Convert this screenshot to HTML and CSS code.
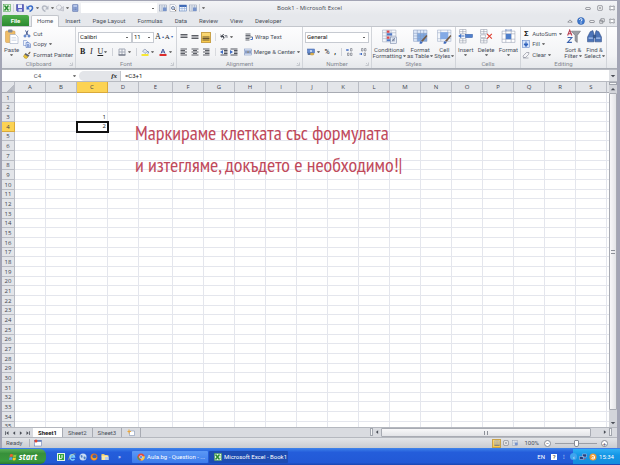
FILE: index.html
```html
<!DOCTYPE html>
<html lang="bg">
<head>
    <meta charset="UTF-8">
    <meta name="viewport" content="width=device-width, initial-scale=1.0">
    <title>Book1 - Microsoft Excel</title>
    <link rel="stylesheet" href="styles.css">
</head>
<body>

    <!-- icons -->
    <svg class="sprite" aria-hidden="true">
        <symbol id="excel" viewBox="0 0 16 16"><rect x="1" y="1" width="14" height="14" fill="#e8f5e4" stroke="#3a9a3c"/><path d="M3 3l8 10M11 3L3 13" stroke="#2a8c30" stroke-width="3"/><path d="M11 5h4M11 8h4M11 11h4" stroke="#6fb96a"/></symbol>
        <symbol id="save" viewBox="0 0 16 16"><path d="M1 1h14v14H3l-2-2z" fill="#5a5fc0" stroke="#3d4299"/><rect x="4" y="1" width="8" height="7" fill="#eef1fb"/><rect x="5" y="10" width="7" height="5" fill="#c9cdea"/></symbol>
        <symbol id="undo" viewBox="0 0 16 16"><path d="M4 7c3-5 10-4 9 2-1 3-3 5-6 6" fill="none" stroke="#3a6cc8" stroke-width="3"/><path d="M1 3v8h7z" fill="#3a6cc8"/></symbol>
        <symbol id="redo" viewBox="0 0 16 16"><path d="M12 7c-3-5-10-4-9 2 1 3 3 5 6 6" fill="none" stroke="#b4b9c4" stroke-width="3"/><path d="M15 3v8H8z" fill="#b4b9c4"/></symbol>
        <symbol id="shape" viewBox="0 0 16 16"><circle cx="6" cy="7" r="5" fill="none" stroke="#b9bcc6" stroke-width="2" stroke-dasharray="3 1"/><path d="M7 12l8-7v9z" fill="#d4d6dc" stroke="#a9adb8"/></symbol>
        <symbol id="calc" viewBox="0 0 16 16"><rect x="3" y="1" width="11" height="14" rx="1" fill="#8fa5d6" stroke="#5a6ea6"/><path d="M5 4h7" stroke="#dde6fa" stroke-width="2"/><path d="M5 8h7M5 11h7" stroke="#56699f" stroke-dasharray="2 1"/></symbol>
        <symbol id="sheeticon" viewBox="0 0 16 16"><rect x="1" y="2" width="14" height="12" fill="#f1f4f8" stroke="#7c8ba6"/><path d="M1 6h14M1 10h14M6 2v12M11 2v12" stroke="#93a3bd"/><rect x="8" y="7" width="7" height="7" fill="#7693cc"/></symbol>
        <symbol id="magnify" viewBox="0 0 16 16"><path d="M2 1h9l3 3v11H2z" fill="#fafbfd" stroke="#a0a6b4"/><circle cx="8" cy="8" r="3" fill="#d9e5f5" stroke="#7686a6" stroke-width="2"/><path d="M10 10l4 4" stroke="#8c7258" stroke-width="2"/></symbol>
        <symbol id="table" viewBox="0 0 16 16"><rect x="1" y="2" width="14" height="12" fill="#eef3fb" stroke="#4770b5"/><path d="M1 4h14" stroke="#3e69b6" stroke-width="4"/><path d="M1 9h14M6 5v9M11 5v9" stroke="#87a3d2"/></symbol>
        <symbol id="paste" viewBox="0 0 28 30"><rect x="2" y="4" width="19" height="23" rx="2" fill="#efbd68" stroke="#c99242"/><rect x="7" y="1" width="9" height="6" rx="2" fill="#7f8798"/><path d="M11 11h11l5 5v13H11z" fill="#fff" stroke="#8d9cba"/><path d="M14 17h9M14 20h10M14 23h10" stroke="#b8c4da"/></symbol>
        <symbol id="cut" viewBox="0 0 16 16"><path d="M5 1l5 9M10 1L6 10" stroke="#45598f" stroke-width="2"/><circle cx="4" cy="12" r="2" fill="none" stroke="#3865bd" stroke-width="2"/><circle cx="12" cy="12" r="2" fill="none" stroke="#3865bd" stroke-width="2"/></symbol>
        <symbol id="copy" viewBox="0 0 16 16"><path d="M1 1h6l2 2v8H1z" fill="#eef3fd" stroke="#5c7ac0"/><path d="M6 5h6l3 3v7H6z" fill="#cfdcf6" stroke="#4466b4"/><path d="M8 9h4M8 11h5M8 13h5" stroke="#4466b4"/></symbol>
        <symbol id="painter" viewBox="0 0 16 16"><path d="M10 5l4-4 1 2-3 4z" fill="#71593c"/><path d="M5 4l8 5-3 3-7-5z" fill="#5b6070"/><path d="M3 7l7 5-3 3c-3 0-5-2-6-4z" fill="#e8c33c" stroke="#a8871f"/></symbol>
        <symbol id="borders" viewBox="0 0 16 16"><path d="M2 2h12v12H2zM8 2v12M2 8h12" fill="none" stroke="#a3a9b6" stroke-width="2"/><path d="M1 14h14" stroke="#5b6170" stroke-width="2"/></symbol>
        <symbol id="bucket" viewBox="0 0 16 16"><path d="M3 6l5-4 5 5-5 4z" fill="#dfe6f2" stroke="#62708e"/><path d="M13 6c2 2 2 4 1 5" stroke="#3c65b0" stroke-width="2" fill="none"/><rect x="1" y="12" width="14" height="4" fill="#f6e736"/></symbol>
        <symbol id="fontcolor" viewBox="0 0 16 16"><path d="M4 11l4-9 4 9M5 8h6" fill="none" stroke="#44599a" stroke-width="2"/><rect x="1" y="12" width="14" height="4" fill="#dc2c2c"/></symbol>
        <symbol id="lines" viewBox="0 0 16 16"><path d="M1 3h14M1 6h14M1 9h14" stroke="#5c5f66" stroke-width="2"/></symbol>
        <symbol id="lines-mid" viewBox="0 0 16 16"><path d="M1 5h14M1 8h14M1 11h14" stroke="#5c5f66" stroke-width="2"/></symbol>
        <symbol id="lines-low" viewBox="0 0 16 16"><path d="M1 8h14M1 11h14M1 14h14" stroke="#6a5630" stroke-width="2"/></symbol>
        <symbol id="left" viewBox="0 0 16 16"><path d="M1 2h13M1 5h9M1 8h13M1 11h9M1 14h13" stroke="#5c5f66" stroke-width="2"/></symbol>
        <symbol id="center" viewBox="0 0 16 16"><path d="M1 2h14M4 5h8M1 8h14M4 11h8M1 14h14" stroke="#5c5f66" stroke-width="2"/></symbol>
        <symbol id="right" viewBox="0 0 16 16"><path d="M2 2h13M6 5h9M2 8h13M6 11h9M2 14h13" stroke="#5c5f66" stroke-width="2"/></symbol>
        <symbol id="orient" viewBox="0 0 16 16"><path d="M4 14L14 5M14 5v5M14 5H9" stroke="#8b8f98" stroke-width="2" fill="none"/><path d="M1 4l7 6M3 9l4-7M1 7h7" stroke="#40444e" stroke-width="2"/></symbol>
        <symbol id="outdent" viewBox="0 0 16 16"><path d="M1 2h14M8 5h7M8 8h7M8 11h7M1 14h14" stroke="#50545e" stroke-width="2"/><path d="M6 4v8L0 8z" fill="#3e6bc4"/></symbol>
        <symbol id="indent" viewBox="0 0 16 16"><path d="M1 2h14M8 5h7M8 8h7M8 11h7M1 14h14" stroke="#50545e" stroke-width="2"/><path d="M0 4v8l6-4z" fill="#3e6bc4"/></symbol>
        <symbol id="wrap" viewBox="0 0 16 16"><path d="M1 2h10M1 5h10M1 8h14M1 11h8M1 14h8" stroke="#666a73" stroke-width="2"/><path d="M15 8v5h-4" stroke="#4b74c1" fill="none" stroke-width="2"/></symbol>
        <symbol id="merge" viewBox="0 0 16 16"><rect x="1" y="2" width="14" height="12" fill="#e6eefb" stroke="#7189b8"/><path d="M1 5h14M1 11h14" stroke="#7189b8"/><path d="M2 8h4M14 8h-4" stroke="#2d4d92" stroke-width="2"/><path d="M7 10l1-4 1 4" stroke="#222" fill="none"/></symbol>
        <symbol id="money" viewBox="0 0 16 16"><rect x="1" y="2" width="14" height="8" fill="#6a8fd2" stroke="#3c60a8"/><circle cx="8" cy="6" r="2" fill="#dbe7fb"/><ellipse cx="10" cy="12" rx="4" ry="2" fill="#edbd4f" stroke="#a97d1f"/><ellipse cx="4" cy="12" rx="3" ry="2" fill="#49638f"/></symbol>
        <symbol id="decimals" viewBox="0 0 16 16"><path d="M1 4h5M3 2L1 4l2 2" stroke="#3e6bc4" stroke-width="2" fill="none"/><path d="M9 1h3v5H9zM3 10h3v5H3zM9 10h3v5H9z" fill="none" stroke="#555a66"/></symbol>
        <symbol id="decimals-less" viewBox="0 0 16 16"><path d="M1 12h5M4 10l2 2-2 2" stroke="#3e6bc4" stroke-width="2" fill="none"/><path d="M5 1h3v5H5zM11 1h3v5h-3zM10 10h3v5h-3z" fill="none" stroke="#555a66"/></symbol>
        <symbol id="condfmt" viewBox="0 0 28 28"><path d="M1 2h25v22H1zM1 7h25M1 13h25M1 18h25M8 2v22M17 2v22" fill="#f6f8fc" stroke="#9aa5bc"/><path d="M9 3h5v4H9zM9 14h5v4H9z" fill="#d8474d"/><path d="M9 8h10v4H9zM9 19h7v4H9z" fill="#5078c4"/><rect x="16" y="15" width="11" height="12" fill="#e7edf7" stroke="#7082a5"/><path d="M19 23l5-6M19 19h5M19 22h5" stroke="#35476f"/></symbol>
        <symbol id="fmttable" viewBox="0 0 28 28"><path d="M1 2h25v21H1z" fill="#dfeafa"/><path d="M8 8h18v15H8z" fill="#7fa9e2"/><path d="M1 2h25v21H1zM1 8h25M1 13h25M1 18h25M8 2v21M14 2v21M20 2v21" fill="none" stroke="#8498bd"/><path d="M15 22l10-11 2 2-9 11z" fill="#735b47"/><path d="M12 27c1-5 3-5 5-3l1 1c-1 2-3 3-6 2z" fill="#3e69bb"/></symbol>
        <symbol id="cellstyles" viewBox="0 0 28 28"><path d="M1 2h25v21H1zM1 7h25M1 18h25M7 2v21M20 2v21" fill="#f4f7fc" stroke="#99a8c4"/><path d="M6 6h15v13H6z" fill="#84aae6"/><path d="M15 22l10-11 2 2-9 11z" fill="#735b47"/><path d="M12 27c1-5 3-5 5-3l1 1c-1 2-3 3-6 2z" fill="#3e69bb"/></symbol>
        <symbol id="insert" viewBox="0 0 28 28"><path d="M3 1h12v8H3zM9 1v8M3 5h12M3 18h12v8H3zM9 18v8M3 22h12" fill="#fff" stroke="#8b93a4"/><rect x="14" y="10" width="13" height="6" fill="#4f80cc" stroke="#355ea8"/><path d="M2 13h10M6 10l-4 3 4 3" stroke="#3c6fc5" stroke-width="2" fill="none"/></symbol>
        <symbol id="delete" viewBox="0 0 28 28"><path d="M3 1h12v8H3zM9 1v8M3 5h12M3 18h12v8H3zM9 18v8M3 22h12M3 11h9v5H3z" fill="#fff" stroke="#8b93a4"/><path d="M15 9l9 9M24 9l-9 9" stroke="#de3b2e" stroke-width="2"/></symbol>
        <symbol id="format" viewBox="0 0 28 28"><path d="M2 4h24v21H2zM2 9h24M2 19h24M9 4v21M19 4v21" fill="#fff" stroke="#8e98ad"/><rect x="9" y="9" width="10" height="10" fill="#4f7fcb"/><path d="M9 2h10M9 0v4M19 0v4" stroke="#3f66ae"/></symbol>
        <symbol id="fill" viewBox="0 0 16 16"><rect x="1" y="1" width="14" height="14" fill="#d5e3fa" stroke="#4f77c0"/><path d="M8 3v7M4 8l4 5 4-5z" fill="#2e60bb" stroke="#2e60bb" stroke-width="2"/></symbol>
        <symbol id="eraser" viewBox="0 0 16 16"><path d="M2 10l7-7h5l-1 4-6 6H3z" fill="#f4f4f7" stroke="#6f7380"/><path d="M2 14h11" stroke="#6f7380"/></symbol>
        <symbol id="sort" viewBox="0 0 28 28"><path d="M3 12L7 2l4 10M4 9h6" stroke="#b63a4d" stroke-width="2" fill="none"/><path d="M3 16h8L3 25h8" stroke="#3a62ae" stroke-width="2" fill="none"/><path d="M10 4h17l-6 8v13l-4-3V12z" fill="#9b9da4" stroke="#63656c"/></symbol>
        <symbol id="find" viewBox="0 0 28 28"><path d="M6 5l5-2 2 7v14H1V15zM22 5l-5-2-2 7v14h12v-9z" fill="#4d74b8" stroke="#27457f"/><path d="M11 11h6v6h-6z" fill="#39598f"/><path d="M3 17h8M17 17h8" stroke="#a9c3ee" stroke-width="2"/></symbol>
        <symbol id="firefox" viewBox="0 0 16 16"><circle cx="8" cy="8" r="7" fill="#e7701c"/><circle cx="9" cy="7" r="4" fill="#3b66b2"/><path d="M2 4c2 8 8 8 12 4-1 9-13 9-12-4z" fill="#f4a42c"/></symbol>
        <symbol id="ie" viewBox="0 0 16 16"><path d="M13 12c-3 4-9 2-9-4s8-6 9 0H5" fill="none" stroke="#7fd0ff" stroke-width="3"/><path d="M2 14C-1 10 10 0 15 2" fill="none" stroke="#f4d24b"/></symbol>
        <symbol id="globe" viewBox="0 0 16 16"><circle cx="8" cy="8" r="7" fill="#c9dcf2"/><path d="M3 5c3-3 5 0 4 3s-3 2-4-3zM9 8c3-2 5 0 4 3s-4 2-4-3z" fill="#4c7fc4"/></symbol>
        <symbol id="folder" viewBox="0 0 16 16"><path d="M1 2h5l2 2h5v3H1z" fill="#e7c667"/><path d="M1 5h14v9H1z" fill="#fae8a4"/><path d="M8 8h7v6H8z" fill="#b4cdf2"/></symbol>
        <symbol id="utorrent" viewBox="0 0 16 16"><rect width="16" height="16" fill="#e4f8e2"/><rect x="2" y="2" width="12" height="12" fill="#37a43b"/><path d="M5 4v5c0 3 5 3 5 0V4M5 8v5" stroke="#fff" stroke-width="2" fill="none"/></symbol>
        <symbol id="chrome" viewBox="0 0 16 16"><circle cx="8" cy="8" r="7" fill="#e3493b"/><path d="M1 6l6 9A7 7 0 0 1 1 6z" fill="#48a54c"/><path d="M15 6a7 7 0 0 1-8 9l4-8z" fill="#f5cf46"/><circle cx="8" cy="8" r="3" fill="#4382e4" stroke="#fff"/></symbol>
        <symbol id="flag" viewBox="0 0 16 16"><path d="M2 3c2-2 4-1 6 0L7 8C5 7 3 7 1 8z" fill="#f0612f"/><path d="M9 3c2 1 4 1 6 0l-1 5c-2 1-4 1-6 0z" fill="#8cc63f"/><path d="M1 9c2-1 4-1 6 0l-1 5c-2-1-4-1-6 0z" fill="#4f9df0"/><path d="M8 9c2 1 4 1 6 0l-1 5c-2 1-4 1-6 0z" fill="#fbc926"/></symbol>
        <symbol id="macro" viewBox="0 0 16 16"><rect x="1" y="3" width="14" height="11" fill="#fff" stroke="#5571b3"/><path d="M1 4h14" stroke="#5571b3" stroke-width="3"/><circle cx="4" cy="4" r="3" fill="#e04632"/></symbol>
        <symbol id="newsheet" viewBox="0 0 16 16"><path d="M5 4h10v9H5z" fill="#fff" stroke="#7184ab"/><path d="M1 5h7M4 1v8" stroke="#eba63a" stroke-width="2"/></symbol>
        <symbol id="min" viewBox="0 0 16 16"><rect x="2" y="7" width="12" height="5" rx="1" fill="#fff" stroke="#777a82" stroke-width="2"/></symbol>
        <symbol id="max" viewBox="0 0 16 16"><rect x="2" y="2" width="12" height="12" rx="1" fill="#fff" stroke="#777a82" stroke-width="2"/><rect x="6" y="6" width="4" height="4" fill="#777a82"/></symbol>
        <symbol id="restore" viewBox="0 0 16 16"><path d="M5 2h9v8H5zM2 6h8v8H2z" fill="#fff" stroke="#777a82" stroke-width="2"/></symbol>
        <symbol id="close" viewBox="0 0 16 16"><path d="M2 3h4l2 2 2-2h4v3l-2 2 2 2v3h-4l-2-2-2 2H2v-3l2-2-2-2z" fill="#fff" stroke="#777a82" stroke-width="2"/></symbol>
        <symbol id="caret-up" viewBox="0 0 16 16"><path d="M2 11l6-6 6 6z" fill="#fff" stroke="#777a82" stroke-width="2"/></symbol>
        <symbol id="help" viewBox="0 0 16 16"><circle cx="8" cy="8" r="7" fill="#3f79ce" stroke="#2a5ba9"/><path d="M5 6c0-4 6-3 5 0l-2 3M8 11v2" fill="none" stroke="#fff" stroke-width="2"/></symbol>
        <symbol id="network" viewBox="0 0 16 16"><path d="M1 7h8v6H1zM7 2h8v6H7z" fill="#24407f" stroke="#b9cdf1"/><path d="M10 13l3-3" stroke="#e44" stroke-width="2"/></symbol>
        <symbol id="avast" viewBox="0 0 16 16"><circle cx="8" cy="8" r="7" fill="#f29a2e"/><path d="M11 11V7c0-3-5-3-6-1M11 8c-6 0-7 4-3 4 2 0 3-2 3-2" fill="none" stroke="#fff" stroke-width="2"/></symbol>
        <symbol id="grow" viewBox="0 0 8 8"><path d="M7 1v6H1" fill="none" stroke="#a0a4ad"/><path d="M2 2l3 3" stroke="#a0a4ad"/></symbol>
        <symbol id="prev" viewBox="0 0 16 16"><path d="M11 3v10L5 8z" fill="#4a4e57"/></symbol>
        <symbol id="next" viewBox="0 0 16 16"><path d="M5 3v10l6-5z" fill="#4a4e57"/></symbol>
        <symbol id="first" viewBox="0 0 16 16"><path d="M12 3v10L6 8zM3 3h2v10H3z" fill="#4a4e57"/></symbol>
        <symbol id="last" viewBox="0 0 16 16"><path d="M4 3v10l6-5zM11 3h2v10h-2z" fill="#4a4e57"/></symbol>
        <symbol id="up" viewBox="0 0 16 16"><path d="M2 11h12L8 5z" fill="#4a4e57"/></symbol>
        <symbol id="down" viewBox="0 0 16 16"><path d="M2 5h12l-6 6z" fill="#4a4e57"/></symbol>
    </svg>

    <div class="window">
        <header class="title-bar">
            <div class="quick-access">
                <svg class="icon"><use href="#excel"/></svg>
                <span class="sep"></span>
                <button aria-label="Save"><svg class="icon"><use href="#save"/></svg></button>
                <button class="drop" aria-label="Undo"><svg class="icon"><use href="#undo"/></svg></button>
                <button class="drop" aria-label="Redo"><svg class="icon"><use href="#redo"/></svg></button>
                <button class="drop" aria-label="Shapes"><svg class="icon"><use href="#shape"/></svg></button>
                <button aria-label="Calculator"><svg class="icon"><use href="#calc"/></svg></button>
                <select class="quick-select" aria-label="Style"><option></option></select>
                <button aria-label="Sheet"><svg class="icon"><use href="#sheeticon"/></svg></button>
                <button aria-label="Preview"><svg class="icon"><use href="#magnify"/></svg></button>
                <button aria-label="Table"><svg class="icon"><use href="#table"/></svg></button>
                <button aria-label="Form"><svg class="icon"><use href="#sheeticon"/></svg></button>
                <span class="sep"></span>
                <button class="drop" aria-label="Customize"></button>
            </div>
            <h1>Book1 - Microsoft Excel</h1>
            <div class="window-buttons">
                <button aria-label="Minimize"><svg class="icon-small"><use href="#min"/></svg></button>
                <button aria-label="Maximize"><svg class="icon-small"><use href="#max"/></svg></button>
                <button aria-label="Close"><svg class="icon-small"><use href="#close"/></svg></button>
            </div>
        </header>

        <nav class="tabs">
            <button class="file-tab">File</button>
            <a href="#" class="active">Home</a>
            <a href="#">Insert</a>
            <a href="#">Page Layout</a>
            <a href="#">Formulas</a>
            <a href="#">Data</a>
            <a href="#">Review</a>
            <a href="#">View</a>
            <a href="#">Developer</a>
            <div class="book-buttons">
                <button aria-label="Collapse ribbon"><svg class="icon-small"><use href="#caret-up"/></svg></button>
                <button aria-label="Help"><svg class="icon"><use href="#help"/></svg></button>
                <button aria-label="Minimize book"><svg class="icon-small"><use href="#min"/></svg></button>
                <button aria-label="Restore book"><svg class="icon-small"><use href="#restore"/></svg></button>
                <button aria-label="Close book"><svg class="icon-small"><use href="#close"/></svg></button>
            </div>
        </nav>

        <div class="ribbon">
            <section class="group clipboard">
                <div class="group-body">
                    <button class="big"><svg class="icon-big"><use href="#paste"/></svg><span class="drop-below">Paste</span></button>
                    <div class="stack">
                        <button><svg class="icon"><use href="#cut"/></svg>Cut</button>
                        <button class="drop"><svg class="icon"><use href="#copy"/></svg>Copy</button>
                        <button><svg class="icon"><use href="#painter"/></svg>Format Painter</button>
                    </div>
                </div>
                <h2>Clipboard</h2><svg class="launcher"><use href="#grow"/></svg>
            </section>
            <section class="group font">
                <div class="group-body rows">
                    <div class="row">
                        <div class="fields">
                            <select class="font-name" aria-label="Font"><option>Calibri</option></select>
                            <select class="font-size" aria-label="Font size"><option>11</option></select>
                        </div>
                        <button class="serif" aria-label="Grow font">A<sup>▴</sup></button>
                        <button class="serif small-a" aria-label="Shrink font">A<sup>▾</sup></button>
                    </div>
                    <div class="row spread">
                        <button class="serif"><b>B</b></button>
                        <button class="serif"><i>I</i></button>
                        <button class="serif drop"><u>U</u></button>
                        <span class="sep"></span>
                        <button class="drop" aria-label="Borders"><svg class="icon"><use href="#borders"/></svg></button>
                        <span class="sep"></span>
                        <button class="drop" aria-label="Fill color"><svg class="icon"><use href="#bucket"/></svg></button>
                        <button class="drop" aria-label="Font color"><svg class="icon"><use href="#fontcolor"/></svg></button>
                    </div>
                </div>
                <h2>Font</h2><svg class="launcher"><use href="#grow"/></svg>
            </section>
            <section class="group alignment">
                <div class="group-body rows">
                    <div class="row">
                        <div class="trio">
                            <button aria-label="Top align"><svg class="icon"><use href="#lines"/></svg></button>
                            <button aria-label="Middle align"><svg class="icon"><use href="#lines-mid"/></svg></button>
                            <button class="pressed" aria-label="Bottom align"><svg class="icon"><use href="#lines-low"/></svg></button>
                        </div>
                        <div class="pair"><button class="drop" aria-label="Orientation"><svg class="icon"><use href="#orient"/></svg></button></div>
                        <button><svg class="icon"><use href="#wrap"/></svg>Wrap Text</button>
                    </div>
                    <div class="row">
                        <div class="trio">
                            <button aria-label="Align left"><svg class="icon"><use href="#left"/></svg></button>
                            <button aria-label="Center"><svg class="icon"><use href="#center"/></svg></button>
                            <button aria-label="Align right"><svg class="icon"><use href="#right"/></svg></button>
                        </div>
                        <div class="pair">
                            <button aria-label="Decrease indent"><svg class="icon"><use href="#outdent"/></svg></button>
                            <button aria-label="Increase indent"><svg class="icon"><use href="#indent"/></svg></button>
                        </div>
                        <button class="drop"><svg class="icon"><use href="#merge"/></svg>Merge &amp; Center</button>
                    </div>
                </div>
                <h2>Alignment</h2><svg class="launcher"><use href="#grow"/></svg>
            </section>
            <section class="group number">
                <div class="group-body rows">
                    <div class="row"><select class="number-format" aria-label="Number format"><option>General</option></select></div>
                    <div class="row spread">
                        <button class="drop" aria-label="Currency"><svg class="icon"><use href="#money"/></svg></button>
                        <button class="sign">%</button>
                        <button class="sign"><b>,</b></button>
                        <span class="sep"></span>
                        <button aria-label="Increase decimal"><svg class="icon"><use href="#decimals"/></svg></button>
                        <button aria-label="Decrease decimal"><svg class="icon"><use href="#decimals-less"/></svg></button>
                    </div>
                </div>
                <h2>Number</h2><svg class="launcher"><use href="#grow"/></svg>
            </section>
            <section class="group styles">
                <div class="group-body">
                    <button class="big"><svg class="icon-big"><use href="#condfmt"/></svg>Conditional<span class="drop">Formatting</span></button>
                    <button class="big"><svg class="icon-big"><use href="#fmttable"/></svg>Format<span class="drop">as Table</span></button>
                    <button class="big"><svg class="icon-big"><use href="#cellstyles"/></svg>Cell<span class="drop">Styles</span></button>
                </div>
                <h2>Styles</h2>
            </section>
            <section class="group cells">
                <div class="group-body">
                    <button class="big"><svg class="icon-big"><use href="#insert"/></svg><span class="drop-below">Insert</span></button>
                    <button class="big"><svg class="icon-big"><use href="#delete"/></svg><span class="drop-below">Delete</span></button>
                    <button class="big"><svg class="icon-big"><use href="#format"/></svg><span class="drop-below">Format</span></button>
                </div>
                <h2>Cells</h2>
            </section>
            <section class="group editing">
                <div class="group-body">
                    <div class="stack">
                        <button class="drop"><b class="sigma">Σ</b>AutoSum</button>
                        <button class="drop"><svg class="icon"><use href="#fill"/></svg>Fill</button>
                        <button class="drop"><svg class="icon"><use href="#eraser"/></svg>Clear</button>
                    </div>
                    <button class="big"><svg class="icon-big"><use href="#sort"/></svg>Sort &amp;<span class="drop">Filter</span></button>
                    <button class="big"><svg class="icon-big"><use href="#find"/></svg>Find &amp;<span class="drop">Select</span></button>
                </div>
                <h2>Editing</h2>
            </section>
        </div>

        <div class="formula-bar">
            <input class="name-box" aria-label="Name box" value="C4">
            <span class="name-drop"></span>
            <button class="fx">fx</button>
            <input class="formula" aria-label="Formula" value="=C3+1">
            <button class="expand" aria-label="Expand formula bar"><svg class="icon-small"><use href="#down"/></svg></button>
        </div>

        <main class="sheet">
            <div class="grid-area">
                <table class="grid" id="grid"></table>
            </div>
            <div class="v-scroll">
                <span class="split"></span>
                <button aria-label="Scroll up"><svg class="icon-small"><use href="#up"/></svg></button>
                <span class="thumb"><i></i></span>
                <button aria-label="Scroll down"><svg class="icon-small"><use href="#down"/></svg></button>
            </div>
            <p class="caption">Маркираме клетката със формулата<br>и изтегляме, докъдето е необходимо!|</p>
        </main>

        <div class="sheet-bar">
            <div class="sheet-nav">
                <button aria-label="First sheet"><svg class="icon-small"><use href="#first"/></svg></button>
                <button aria-label="Previous sheet"><svg class="icon-small"><use href="#prev"/></svg></button>
                <button aria-label="Next sheet"><svg class="icon-small"><use href="#next"/></svg></button>
                <button aria-label="Last sheet"><svg class="icon-small"><use href="#last"/></svg></button>
            </div>
            <div class="sheet-tabs">
                <a href="#" class="active">Sheet1</a>
                <a href="#">Sheet2</a>
                <a href="#">Sheet3</a>
                <a href="#" aria-label="Insert sheet"><svg class="icon"><use href="#newsheet"/></svg></a>
            </div>
            <div class="h-scroll">
                <span class="split"></span>
                <button aria-label="Scroll left"><svg class="icon-small"><use href="#prev"/></svg></button>
                <span class="thumb"><i></i></span>
                <button aria-label="Scroll right"><svg class="icon-small"><use href="#next"/></svg></button>
                <span class="split"></span>
            </div>
        </div>

        <footer class="status-bar">
            <span class="ready">Ready</span>
            <svg class="icon"><use href="#macro"/></svg>
            <div class="views">
                <button class="pressed" aria-label="Normal"><svg class="icon-small"><use href="#borders"/></svg></button>
                <button aria-label="Page layout"><svg class="icon-small"><use href="#max"/></svg></button>
                <button aria-label="Page break"><svg class="icon-small"><use href="#sheeticon"/></svg></button>
            </div>
            <span class="percent">100%</span>
            <button class="round" aria-label="Zoom out">−</button>
            <input type="range" aria-label="Zoom" min="0" max="100" value="50">
            <button class="round" aria-label="Zoom in">+</button>
        </footer>
    </div>

    <div class="taskbar">
        <button class="start"><svg class="icon"><use href="#flag"/></svg>start</button>
        <div class="quick-launch">
            <svg class="icon"><use href="#utorrent"/></svg>
            <svg class="icon"><use href="#ie"/></svg>
            <svg class="icon"><use href="#globe"/></svg>
            <svg class="icon"><use href="#firefox"/></svg>
            <svg class="icon"><use href="#folder"/></svg>
            <span class="more">»</span>
        </div>
        <button class="task"><svg class="icon"><use href="#chrome"/></svg>Aula.bg - Question - ...</button>
        <button class="task current"><svg class="icon"><use href="#excel"/></svg>Microsoft Excel - Book1</button>
        <div class="language"><span>EN</span><span class="lang-help">?</span><span>⁝</span></div>
        <div class="tray">
            <span class="tray-arrow">‹</span>
            <svg class="icon"><use href="#network"/></svg>
            <svg class="icon"><use href="#avast"/></svg>
            <span class="clock">15:34</span>
        </div>
    </div>

    <script src="grid.js"></script>
</body>
</html>
```

FILE: grid.js
```js
const columns = 'ABCDEFGHIJKLMNOPQRS'.split('');
const values = { C3: 1, C4: 2 };
const selected = { column: 'C', row: 4 };
const grid = document.getElementById('grid');

function addCell(row, tag, text, className) {
    const cell = document.createElement(tag);
    cell.textContent = text;
    if (className) {
        cell.className = className;
    }
    row.appendChild(cell);
}

const head = grid.createTHead().insertRow();
addCell(head, 'th', '', 'corner');
columns.forEach(function (name) {
    let className = name === 'E' ? 'wide' : '';
    if (name === selected.column) {
        className = 'selected';
    }
    addCell(head, 'th', name, className);
});
addCell(head, 'th', '', 'rest');

const body = grid.createTBody();
for (let i = 1; i <= 35; i++) {
    const row = body.insertRow();
    addCell(row, 'th', i, i === selected.row ? 'selected' : '');
    columns.forEach(function (name) {
        const active = name === selected.column && i === selected.row;
        addCell(row, 'td', values[name + i] || '', active ? 'active-cell' : '');
    });
    addCell(row, 'td', '');
}
```

FILE: styles.css
```css
*, *::before, *::after {
    box-sizing: border-box;
}

body {
    margin: 0;
    height: 100vh;
    display: flex;
    flex-direction: column;
    overflow: hidden;
    font-family: Roboto, "Open Sans", sans-serif;
    font-size: 6px;
    line-height: 8px;
    color: #4a505b;
    background: #e4e6ea;
}

.sprite {
    display: none;
}

button, input, select {
    font: inherit;
    color: inherit;
    margin: 0;
    padding: 0;
    border: 0;
    background: none;
    appearance: none;
    outline: none;
    border-radius: 0;
}

button {
    display: flex;
    align-items: center;
    justify-content: center;
    gap: 2px;
    white-space: nowrap;
}

a {
    color: inherit;
    text-decoration: none;
}

h1, h2, p {
    margin: 0;
    font-size: inherit;
    font-weight: normal;
}

.icon {
    width: 8px;
    height: 8px;
    flex: none;
}

.icon-small {
    width: 6px;
    height: 6px;
    flex: none;
}

.icon-big {
    width: 15px;
    height: 15px;
}

.sep {
    width: 1px;
    height: 8px;
    background: #cfd2d8;
}

.drop::after, .drop-below::after, .name-drop {
    content: "";
    width: 3px;
    border: 1px solid transparent;
    border-top: 2px solid #777;
    border-bottom: 0;
}

.window {
    flex: 1;
    min-height: 0;
    display: flex;
    flex-direction: column;
    border: solid #a3a5b5;
    border-width: 1px 3px 0 2px;
}

/* title */
.title-bar {
    height: 14px;
    flex: none;
    display: grid;
    grid-template-columns: 1fr auto 1fr;
    align-items: center;
    background: linear-gradient(#f3f4f6, #e6e8ec);
}

.title-bar h1 {
    font-family: "Open Sans", sans-serif;
    color: #444952;
}

.quick-access {
    display: flex;
    align-items: center;
    gap: 2px;
    padding-left: 1px;
}

.quick-select {
    width: 76px;
    height: 10px;
}

.window-buttons, .book-buttons {
    display: flex;
    justify-content: flex-end;
    align-items: center;
    gap: 6px;
    padding-right: 2px;
}

.book-buttons {
    margin-left: auto;
    gap: 4px;
}

/* tabs */
.tabs {
    height: 12px;
    flex: none;
    display: flex;
    background: #e6e8ec;
    border-bottom: 1px solid #c3c6cc;
}

.tabs > a {
    padding: 1px 6px;
    line-height: 10px;
}

.tabs .active {
    height: 12px;
    padding: 0 5px;
    background: #fcfcfd;
    border: 1px solid #c3c6cc;
    border-bottom: 0;
    border-radius: 2px 2px 0 0;
}

.file-tab {
    width: 27px;
    margin-right: 2px;
    color: #fff;
    font-weight: bold;
    background: linear-gradient(#4fae4b, #2b8a31);
    border-radius: 2px 2px 0 0;
}

/* ribbon */
.ribbon {
    height: 42px;
    flex: none;
    display: flex;
    background: linear-gradient(#fdfdfe, #f2f3f5 70%, #e6e8eb);
    border-bottom: 1px solid #a9adb5;
}

.group {
    position: relative;
    display: flex;
    flex-direction: column;
    border-right: 1px solid #d2d5da;
}

.group h2 {
    height: 8px;
    text-align: center;
    color: #84888f;
}

.group-body {
    flex: 1;
    display: flex;
    justify-content: space-around;
    padding-top: 2px;
}

.launcher {
    position: absolute;
    right: 2px;
    bottom: 2px;
    width: 4px;
    height: 4px;
}

.clipboard { width: 74px; }
.font { width: 101px; }
.alignment { width: 126px; }
.number { width: 69px; }
.styles { width: 84px; }
.cells { width: 65px; }
.editing { width: 86px; }

.big {
    flex-direction: column;
    justify-content: flex-start;
    gap: 0;
    line-height: 6px;
}

.big .icon-big {
    margin-bottom: 3px;
}

.big .drop, .drop-below {
    display: flex;
    align-items: center;
    gap: 1px;
}

.drop-below {
    flex-direction: column;
}

.stack {
    display: flex;
    flex-direction: column;
    justify-content: space-around;
    align-items: flex-start;
}

.sigma {
    width: 8px;
    font-size: 8px;
    color: #222;
}

.rows {
    flex-direction: column;
    padding: 3px 2px 1px;
}

.row {
    display: flex;
    align-items: center;
    gap: 4px;
    height: 12px;
}

.font .row {
    gap: 1px;
}

.spread {
    justify-content: space-around;
    gap: 1px;
}

.fields {
    display: flex;
}

select {
    height: 11px;
    padding-left: 1px;
    border: 1px solid #c6cad1;
}

.font-name, .font-size, .number-format, .quick-select {
    color: #222;
    background: #fff linear-gradient(#666, #666) no-repeat right 3px center / 2px 1px;
}

.font-name {
    width: 54px;
}

.font-size {
    width: 22px;
}

.number-format {
    width: 65px;
}

.quick-select {
    border: 0;
}

.serif {
    font-family: "Liberation Serif", serif;
    font-size: 8px;
    color: #222;
    gap: 1px;
}

.small-a {
    font-size: 7px;
}

.serif sup {
    font-size: 4px;
    line-height: 4px;
    color: #3c65b0;
}

.sign {
    font-size: 7px;
    color: #222;
}

.trio {
    display: flex;
    gap: 1px;
}

.trio button {
    width: 10px;
    height: 11px;
}

.pair {
    display: flex;
    gap: 2px;
    width: 26px;
    padding-left: 4px;
    border-left: 1px solid #d8dade;
}

.pressed {
    background: linear-gradient(#fbd978, #f8c94a);
    border: 1px solid #c9a24a;
}

/* formula bar */
.formula-bar {
    height: 13px;
    flex: none;
    display: flex;
    align-items: center;
    background: #fff;
    border: solid #b7bac1;
    border-width: 1px 0;
}

.name-box {
    width: 71px;
    text-align: center;
}

.name-drop {
    margin-right: 3px;
}

.fx {
    width: 42px;
    height: 10px;
    justify-content: flex-end;
    padding-right: 3px;
    background: #e3e5e9;
    border-right: 1px solid #c3c6cc;
    border-radius: 5px 0 0 5px;
    font-family: "Liberation Serif", serif;
    font-style: italic;
    font-weight: bold;
    font-size: 7px;
    color: #222;
}

.formula {
    flex: 1;
    min-width: 0;
    padding-left: 4px;
    color: #222;
}

.expand {
    width: 8px;
    height: 11px;
    background: #dfe1e5;
}

/* sheet */
.sheet {
    position: relative;
    flex: 1;
    min-height: 0;
    display: flex;
    background: #fff;
}

.grid-area {
    flex: 1;
    min-width: 0;
    overflow: hidden;
}

.grid {
    table-layout: fixed;
    width: 100%;
    min-width: 608px;
    border-spacing: 0;
    font-family: "Open Sans", "Noto Sans", sans-serif;
    color: #222;
}

.grid tr {
    height: 10px;
}

.grid tbody tr:nth-child(3n+2) {
    height: 9px;
}

.grid th, .grid td {
    padding: 0;
    line-height: 8px;
    border: solid #e4e6ed;
    border-width: 0 1px 1px 0;
    overflow: hidden;
}

.grid th {
    font-weight: normal;
    color: #40444c;
    background: #e3e5e9;
    border-color: #b9bcc4;
}

.grid td {
    text-align: right;
    padding-right: 1px;
}

.grid thead th {
    width: 31px;
    height: 11px;
    border-bottom-color: #a8abb3;
}

.grid thead .corner {
    width: 13px;
    background: linear-gradient(135deg, #e3e5e9 65%, #b9bcc4 65%);
}

.grid thead .wide {
    width: 34px;
}

.grid thead .rest {
    width: auto;
}

.grid .selected {
    background: #fcd353;
    border-color: #d9a93a;
}

.grid .active-cell {
    outline: 2px solid #111;
    outline-offset: -1px;
    line-height: 7px;
}

.caption {
    position: absolute;
    left: 133px;
    top: 35px;
    font-family: "PT Sans Narrow", "Liberation Sans Narrow", "Open Sans", sans-serif;
    font-size: 20px;
    line-height: 32px;
    color: #c0495b;
    white-space: nowrap;
}

.v-scroll {
    width: 8px;
    display: flex;
    flex-direction: column;
    background: #d3d5da;
}

.v-scroll button, .h-scroll button {
    width: 8px;
    height: 8px;
}

.split {
    width: 3px;
    height: 8px;
    border: 1px solid #a2a6ae;
    background: #f4f5f6;
}

.v-scroll .split {
    width: 8px;
    height: 3px;
}

.thumb {
    flex: 1;
    display: flex;
    align-items: center;
    justify-content: center;
    background: linear-gradient(90deg, #f8f8f9, #e3e4e8);
    border: 1px solid #a8abb3;
    border-radius: 1px;
}

.thumb i {
    width: 4px;
    height: 4px;
    border: solid #8d9199;
    border-width: 1px 0;
}

.v-scroll .thumb {
    margin-bottom: 9px;
}

/* sheet tabs */
.sheet-bar {
    height: 10px;
    flex: none;
    display: flex;
    background: #d9dbe0;
    border-top: 1px solid #b5b8bf;
}

.sheet-nav {
    display: flex;
    padding: 0 2px 0 1px;
}

.sheet-nav button {
    width: 7px;
}

.sheet-tabs {
    display: flex;
}

.sheet-tabs a {
    display: flex;
    align-items: center;
    padding: 0 5px;
    background: linear-gradient(110deg, transparent 0 1px, #d9dbe0 1px);
    border-right: 1px solid #a8abb3;
}

.sheet-tabs .active {
    color: #222;
    background: #fff;
    font-weight: bold;
}

.h-scroll {
    width: 247px;
    margin-left: auto;
    padding-right: 5px;
    display: flex;
}

.h-scroll .thumb {
    margin-right: 10px;
    background: linear-gradient(#f8f8f9, #e3e4e8);
}

.h-scroll .thumb i {
    border-width: 0 1px;
}

/* status bar */
.status-bar {
    height: 11px;
    flex: none;
    display: flex;
    align-items: center;
    gap: 4px;
    padding: 0 9px 0 4px;
    background: linear-gradient(#e3e5e8, #c9ccd1);
    border-top: 1px solid #b5b8bf;
}

.ready {
    padding-right: 7px;
    border-right: 1px solid #b0b3ba;
}

.views {
    display: flex;
    margin-left: auto;
    margin-right: 1px;
}

.views button {
    width: 9px;
    height: 9px;
}

.percent {
    margin-right: 1px;
}

.round {
    width: 7px;
    height: 7px;
    line-height: 5px;
    background: #fff;
    border: 1px solid #888c95;
    border-radius: 50%;
}

input[type="range"] {
    width: 42px;
    height: 7px;
    background: linear-gradient(#9a9ea6, #9a9ea6) no-repeat center / 100% 1px;
}

input[type="range"]::-webkit-slider-thumb {
    appearance: none;
    width: 5px;
    height: 7px;
    background: #fff;
    border: 1px solid #888c95;
    border-radius: 1px 1px 2px 2px;
}

/* taskbar */
.taskbar {
    height: 17px;
    flex: none;
    display: flex;
    align-items: center;
    color: #fff;
    background: linear-gradient(#3f84ea, #245ddb 25%, #2259d6 85%, #1a46b0);
}

.start {
    width: 46px;
    height: 15px;
    margin-right: 11px;
    gap: 2px;
    font-family: "Open Sans", sans-serif;
    font-size: 8px;
    font-weight: bold;
    font-style: italic;
    background: linear-gradient(#5cb159, #37903a 30%, #3a9a3d 80%, #2a7a2d);
    border-radius: 0 6px 6px 0;
}

.quick-launch {
    width: 75px;
    display: flex;
    align-items: center;
    gap: 3px;
}

.more {
    margin-left: 6px;
}

.task {
    width: 76px;
    height: 12px;
    margin-right: 1px;
    padding-left: 5px;
    justify-content: flex-start;
    background: linear-gradient(#5c98f5, #3c7cec);
    border-radius: 1px;
}

.current {
    width: 79px;
    background: #1d4cb3;
}

.language {
    display: flex;
    align-items: center;
    gap: 6px;
    margin-left: auto;
    padding-right: 8px;
}

.lang-help {
    width: 6px;
    line-height: 6px;
    text-align: center;
    color: #222;
    background: #fff;
}

.tray {
    height: 15px;
    display: flex;
    align-items: center;
    gap: 2px;
    padding-right: 6px;
    background: linear-gradient(#31b0f4, #1496e6 40%, #148ddd);
}

.tray-arrow {
    width: 7px;
    line-height: 7px;
    margin-left: -3px;
    text-align: center;
    background: #3fa4ee;
    border-radius: 50%;
}
```
